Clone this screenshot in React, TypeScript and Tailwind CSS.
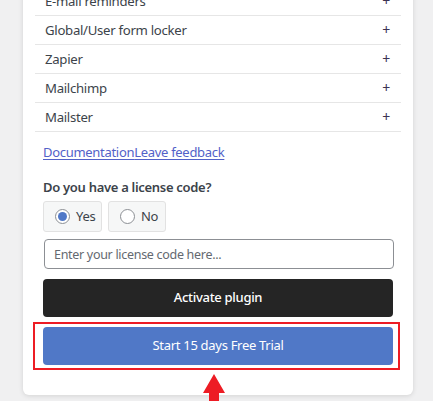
import { useState } from "react";

const addons = [
  "E-mail reminders",
  "Global/User form locker",
  "Zapier",
  "Mailchimp",
  "Mailster",
];

function Radio({ checked }: { checked: boolean }) {
  return (
    <span className="flex size-[15px] items-center justify-center rounded-full border border-[#8c8f94] bg-white">
      {checked && <span className="size-[9px] rounded-full bg-[#5078c7]" />}
    </span>
  );
}

export default function App() {
  const [hasCode, setHasCode] = useState(true);

  return (
    <div
      className="min-h-screen bg-[#f0f0f1] tracking-[-0.3px] text-[#3c434a]"
      style={{ fontFamily: '"Noto Sans", "Open Sans", sans-serif' }}
    >
      <div className="ml-[23px] -mt-[13px] w-[390px] rounded-b-md bg-white pb-[30px] shadow-[0_1px_5px_rgba(0,0,0,0.12)]">
        <ul className="px-[12px]">
          {addons.map((name) => (
            <li
              key={name}
              className="flex items-center justify-between border-b border-[#e6e6e6] py-[4px] pl-[10px] pr-[11px] text-[13.2px] leading-[20px]"
            >
              <span>{name}</span>
              <span className="text-[14px] text-[#3c3350]">+</span>
            </li>
          ))}
        </ul>

        <div className="px-[20px]">
          <div className="mt-[10px] text-[13px] leading-[20px]">
            <a href="#" className="text-[#5261c8] underline underline-offset-2">
              Documentation
            </a>
            <a href="#" className="text-[#5261c8] underline underline-offset-2">
              Leave feedback
            </a>
          </div>

          <p className="mt-[15px] text-[13px] font-semibold leading-[20px] text-[#3c434a]">
            Do you have a license code?
          </p>

          <div className="mt-[4px] flex gap-[6px]">
            <button
              onClick={() => setHasCode(true)}
              className="flex h-[31px] w-[59px] items-center gap-[6px] rounded-[3px] border border-[#e2e2e2] bg-[#f6f7f7] pl-[11px] text-[13px]"
            >
              <Radio checked={hasCode} />
              <span>Yes</span>
            </button>
            <button
              onClick={() => setHasCode(false)}
              className="flex h-[31px] w-[58px] items-center gap-[6px] rounded-[3px] border border-[#e2e2e2] bg-[#f6f7f7] pl-[11px] text-[13px]"
            >
              <Radio checked={!hasCode} />
              <span>No</span>
            </button>
          </div>

          <input
            type="text"
            placeholder="Enter your license code here..."
            className="mt-[7px] ml-px h-[30px] w-[350px] rounded-[4px] border border-[#8c8f94] px-[9px] text-[12.5px] placeholder-[#646970] outline-none"
          />

          <button className="mt-[10px] flex h-[38px] w-full items-center justify-center rounded-[4px] bg-[#252525] text-[13px] font-medium text-white">
            Activate plugin
          </button>

          <div className="relative mt-[10px]">
            <button className="flex h-[38px] w-full items-center justify-center rounded-[4px] bg-[#5078c7] text-[13px] text-white">
              Start 15 days Free Trial
            </button>
            {/* annotation frame + arrow */}
            <div className="pointer-events-none absolute -left-[10px] -right-[7px] -top-[5px] -bottom-[5px] border-2 border-[#ed1c24]" />
            <svg
              className="absolute left-[160px] top-[47px]"
              width="22"
              height="42"
              viewBox="0 0 22 42"
            >
              <path d="M11 0 L22 19 L16 19 L16 42 L6 42 L6 19 L0 19 Z" fill="#ed1c24" />
            </svg>
          </div>
        </div>
      </div>
    </div>
  );
}
